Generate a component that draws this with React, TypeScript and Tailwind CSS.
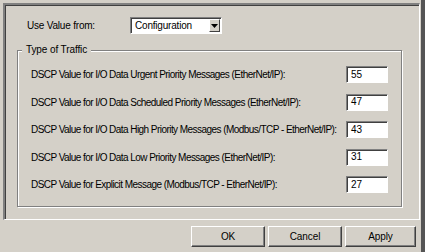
const rows = [
  { label: "DSCP Value for I/O Data Urgent Priority Messages (EtherNet/IP):", value: "55" },
  { label: "DSCP Value for I/O Data Scheduled Priority Messages (EtherNet/IP):", value: "47" },
  { label: "DSCP Value for I/O Data High Priority Messages (Modbus/TCP - EtherNet/IP):", value: "43" },
  { label: "DSCP Value for I/O Data Low Priority Messages (EtherNet/IP):", value: "31" },
  { label: "DSCP Value for Explicit Message (Modbus/TCP - EtherNet/IP):", value: "27" },
];

function Button({ label, width }: { label: string; width: string }) {
  return (
    <div
      className={`${width} h-[21px] flex items-center justify-center border border-t-white border-l-white border-r-[#404040] border-b-[#404040] shadow-[inset_-1px_-1px_0_#808080] text-[10px] tracking-[-0.1px] text-black`}
    >
      {label}
    </div>
  );
}

export default function App() {
  return (
    <div
      className="w-[425px] h-[252px] bg-[#d4d0c8] flex overflow-hidden text-black"
      style={{ fontFamily: '"Liberation Sans", Arial, sans-serif' }}
    >
      <div className="w-[421px] flex flex-col pt-[3px] pl-[3px]">
        {/* Sunken page panel */}
        <div className="w-[417px] h-[217px] border-t-2 border-l-2 border-t-[#808080] border-l-[#808080] border-r border-b border-r-white border-b-white shadow-[inset_1px_1px_0_#404040] flex flex-col">
          {/* Use value from */}
          <div className="flex items-center pl-[22px] mt-[12px] h-[17px]">
            <span className="w-[103px] text-[10px] tracking-[-0.2px]">Use Value from:</span>
            <div className="w-[92px] h-[17px] bg-white border-t border-l border-t-[#808080] border-l-[#808080] border-r border-b border-r-white border-b-white shadow-[inset_1px_1px_0_#404040] flex items-center">
              <span className="flex-1 pl-[4px] text-[10px] tracking-[-0.2px] leading-none">Configuration</span>
              <div className="w-[11px] h-[13px] mr-[1px] bg-[#d4d0c8] border border-t-white border-l-white border-r-[#404040] border-b-[#404040] flex items-center justify-center">
                <svg width="7" height="4" viewBox="0 0 7 4">
                  <path d="M0 0h7L3.5 4z" fill="#000" />
                </svg>
              </div>
            </div>
          </div>

          {/* Type of Traffic group */}
          <div className="relative ml-[12px] mt-[16px] w-[385px] h-[157px] border border-[#808080] shadow-[1px_1px_0_#fff,inset_1px_1px_0_#fff] flex flex-col gap-[10.5px] pt-[15px] pl-[13px]">
            <span className="absolute left-[4px] top-[-8px] bg-[#d4d0c8] px-[4px] text-[10px] tracking-[-0.1px] leading-[14px]">
              Type of Traffic
            </span>
            {rows.map((r) => (
              <div key={r.value} className="flex items-center h-[17px]">
                <span className="w-[315px] text-[10px] tracking-[-0.55px] whitespace-nowrap">{r.label}</span>
                <div className="w-[42px] h-[17px] bg-white border-t border-l border-t-[#808080] border-l-[#808080] border-r border-b border-r-white border-b-white shadow-[inset_1px_1px_0_#404040] flex items-center pl-[4px] text-[10px] leading-none">
                  {r.value}
                </div>
              </div>
            ))}
          </div>
        </div>

        {/* Dialog buttons */}
        <div className="flex justify-end gap-[3px] mt-[6px] pr-[5px]">
          <Button label="OK" width="w-[74px]" />
          <Button label="Cancel" width="w-[74px]" />
          <Button label="Apply" width="w-[71px]" />
        </div>
      </div>
      <div className="w-[4px] h-full bg-[#555555]" />
    </div>
  );
}
